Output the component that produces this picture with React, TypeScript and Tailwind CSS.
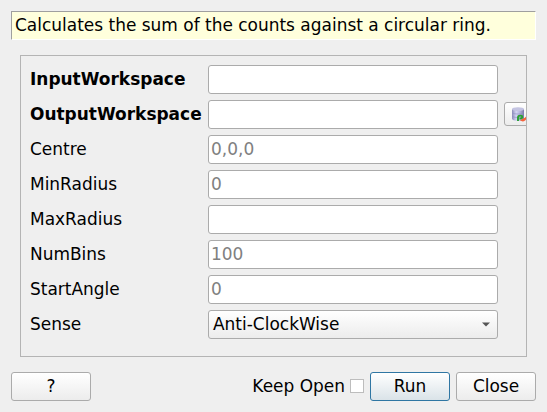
const fields = [
  { label: 'InputWorkspace', value: '', required: true },
  { label: 'OutputWorkspace', value: '', required: true, action: true },
  { label: 'Centre', value: '0,0,0' },
  { label: 'MinRadius', value: '0' },
  { label: 'MaxRadius', value: '' },
  { label: 'NumBins', value: '100' },
  { label: 'StartAngle', value: '0' },
];

const buttonBase =
  'flex h-[29px] w-20 items-center justify-center rounded-[3px] border bg-linear-to-b from-white';

function DatabaseIcon() {
  return (
    <svg width="16" height="16" viewBox="0 0 16 16" className="shrink-0">
      <defs>
        <linearGradient id="cylinder" x1="0" x2="1" y1="0" y2="0">
          <stop offset="0" stopColor="#8c8cb8" />
          <stop offset="0.35" stopColor="#d4d4f4" />
          <stop offset="0.65" stopColor="#b4b4dc" />
          <stop offset="1" stopColor="#7878a8" />
        </linearGradient>
      </defs>
      <path d="M1 3v9.5c0 1.5 2.7 2.3 6 2.3s6-.8 6-2.3V3z" fill="url(#cylinder)" />
      <path d="M1 6.5c1 2 11 2 12 0M1 10c1 2 11 2 12 0" fill="none" stroke="#8c8cc0" strokeWidth="0.6" />
      <ellipse cx="7" cy="3.2" rx="6" ry="1.9" fill="#c4c4e2" />
      <path d="M15.8 9.5c.3 3.2-1.2 5.8-4 6L9 14.4l2.5-1.6c1.8-.3 2.8-1.3 4.300-3.300z" fill="#f4633c" />
      <path d="M7 15v-3.500c0-2.300 4.300-2.600 4.300-.4 0 1.400-1.500 1.500-2.800 1.500" fill="none" stroke="#28a030" strokeWidth="1.900" />
    </svg>
  );
}

export default function App() {
  return (
    <div className="flex h-[412px] w-[547px] flex-col bg-[#efefef] px-[11px] pt-[11px] font-['DejaVu_Sans',sans-serif] text-[16.98px] leading-[27px] text-black">
      <div className="h-[29px] w-[525px] border border-t-[#9f9f9f] border-r-white border-b-white border-l-[#9f9f9f] bg-[#ffffdc] pl-[3px] whitespace-nowrap">
        Calculates the sum of the counts against a circular ring.
      </div>

      <div className="mt-[15px] ml-[9px] flex h-[302px] w-[507px] flex-col gap-1.5 overflow-hidden border border-[#b4b4b4] pt-[9px] pl-[9px]">
        {fields.map((f) => (
          <div key={f.label} className="flex h-[29px] shrink-0 items-center">
            <div className={f.required ? 'w-[178px] shrink-0 font-bold' : 'w-[178px] shrink-0'}>{f.label}</div>
            <div className="h-[29px] w-[290px] shrink-0 rounded-[3px] border border-[#ababab] bg-white pl-[2px] text-[#808080]">
              {f.value}
            </div>
            {f.action && (
              <div className="mb-px ml-1.5 flex h-6 w-[30px] shrink-0 items-center rounded-[3px] border border-[#ababab] bg-linear-to-b from-white to-[#ececec] pl-1.5">
                <DatabaseIcon />
              </div>
            )}
          </div>
        ))}
        <div className="flex h-[29px] shrink-0 items-center">
          <div className="w-[178px] shrink-0">Sense</div>
          <div className="flex h-[29px] w-[290px] items-center justify-between rounded-[3px] border border-[#ababab] bg-linear-to-b from-white to-[#ececec] pr-[7px] pl-1">
            <span>Anti-ClockWise</span>
            <svg width="8" height="5" viewBox="0 0 8 5">
              <path d="M0 .5h8L4 4.500z" fill="#555" />
            </svg>
          </div>
        </div>
      </div>

      <div className="mt-[15px] flex h-[29px] w-[525px] items-center">
        <div className={`${buttonBase} border-[#ababab] to-[#ececec]`}>?</div>
        <div className="ml-auto flex items-center gap-[5px]">
          <span>Keep Open</span>
          <span className="mb-px size-3.5 border border-[#bdbdbd] bg-white" />
        </div>
        <div className={`${buttonBase} ml-1.5 border-[#2f76a3] to-[#dae3e8]`}>Run</div>
        <div className={`${buttonBase} ml-1.5 border-[#ababab] to-[#ececec]`}>Close</div>
      </div>
    </div>
  );
}
